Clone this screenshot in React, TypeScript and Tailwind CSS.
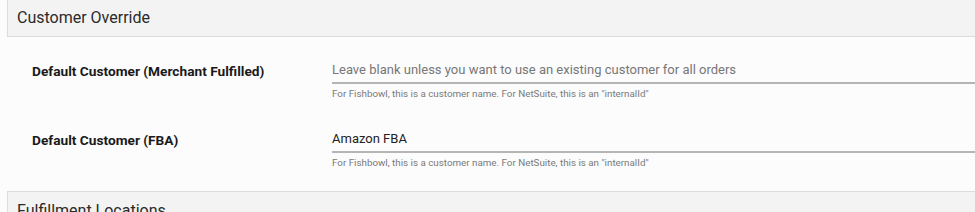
import React from "react"

const font = { fontFamily: "Roboto, 'Liberation Sans', sans-serif" }

function SectionHeader({ title, top = true }: { title: string; top?: boolean }) {
  return (
    <div
      className={`h-[37px] bg-[#f3f3f3] border-l border-b border-[#dcdcdc] pl-[9px] flex items-center text-[16px] text-[#2a2a2a] ${
        top ? "border-t pt-[3px]" : ""
      }`}
    >
      {title}
    </div>
  )
}

function Field({
  label,
  value,
  placeholder,
}: {
  label: string
  value?: string
  placeholder?: string
}) {
  return (
    <div className="flex pl-[25px]">
      <div className="w-[300px] h-[28px] flex items-center text-[13.7px] font-bold text-[#1a1a1a]">{label}</div>
      <div className="flex-1">
        <input
          readOnly
          defaultValue={value}
          placeholder={placeholder}
          className="w-full h-[25px] bg-transparent border-b-2 border-[#b5b5b5] text-[13px] text-[#222] placeholder:text-[#777] outline-none pb-[2px]"
          style={font}
        />
        <div className="mt-[4px] leading-[12px] text-[9.8px] text-[#7a7a7a]">
          For Fishbowl, this is a customer name. For NetSuite, this is an "internalId"
        </div>
      </div>
    </div>
  )
}

export default function App() {
  return (
    <div className="w-[975px] h-[212px] overflow-hidden bg-[#fcfcfc]" style={font}>
      <div className="ml-[7px]">
        <SectionHeader title="Customer Override" top={false} />
        <div className="pt-[20px] pb-[22px] flex flex-col gap-[26px]">
          <Field
            label="Default Customer (Merchant Fulfilled)"
            placeholder="Leave blank unless you want to use an existing customer for all orders"
          />
          <Field label="Default Customer (FBA)" value="Amazon FBA" />
        </div>
        <SectionHeader title="Fulfillment Locations" />
      </div>
    </div>
  )
}
